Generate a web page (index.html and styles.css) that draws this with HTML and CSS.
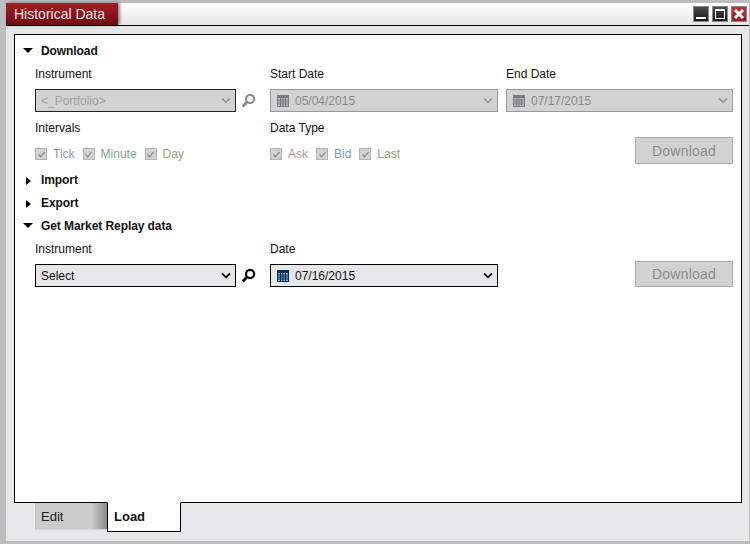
FILE: index.html
```html
<!DOCTYPE html>
<html lang="en">
<head>
<meta charset="utf-8">
<title>Historical Data</title>
<link rel="stylesheet" href="styles.css">
</head>
<body>
<svg class="defs" width="0" height="0" aria-hidden="true">
  <symbol id="chev" viewBox="0 0 12 8"><path d="M1.2 1.5 6 6.2l4.8-4.7" fill="none" stroke="currentColor" stroke-width="2.2"/></symbol>
  <symbol id="search" viewBox="0 0 14 14"><circle cx="8.5" cy="5.5" r="3.8" fill="none" stroke="currentColor" stroke-width="2"/><path d="M5.6 8.4 1.6 12.6" stroke="currentColor" stroke-width="2.6"/></symbol>
  <symbol id="cal" viewBox="0 0 12 12"><rect width="12" height="12" fill="currentColor"/><rect x="1" y="3" width="10" height="8" fill="#cfe0f0" opacity=".75"/><path d="M1 5h10M1 7h10M1 9h10M3.5 3v8M6 3v8M8.5 3v8" stroke="currentColor" stroke-width="1"/></symbol>
  <symbol id="check" viewBox="0 0 9 9"><path d="M1.5 4.5 3.6 6.8 7.6 1.8" fill="none" stroke="currentColor" stroke-width="1.3"/></symbol>
</svg>
<div class="window">
  <header class="titlebar">
    <div class="title">Historical Data</div>
    <div class="winbtns">
      <span class="winbtn dark"><span class="min"></span></span>
      <span class="winbtn dark"><span class="max"></span></span>
      <span class="winbtn red"><svg width="12" height="12" viewBox="0 0 12 12"><path d="M2 2l8 8M10 2l-8 8" stroke="#fff" stroke-width="3"/></svg></span>
    </div>
  </header>
  <main class="panel">
    <div class="sechead"><span class="tri-down"></span>Download</div>
    <div class="grid">
      <div class="field">
        <label class="lbl">Instrument</label>
        <div class="pickrow">
          <div class="select w201 off focusb"><span class="val portfolio">&lt;_Portfolio&gt;</span><svg class="chev" width="10" height="7"><use href="#chev"/></svg></div>
          <svg class="search off-i" width="15" height="15"><use href="#search"/></svg>
        </div>
      </div>
      <div class="field">
        <label class="lbl">Start Date</label>
        <div class="select w228 off"><svg class="cal" width="12" height="12"><use href="#cal"/></svg><span class="val">05/04/2015</span><svg class="chev" width="10" height="7"><use href="#chev"/></svg></div>
      </div>
      <div class="field">
        <label class="lbl">End Date</label>
        <div class="select w227 off"><svg class="cal" width="12" height="12"><use href="#cal"/></svg><span class="val">07/17/2015</span><svg class="chev" width="10" height="7"><use href="#chev"/></svg></div>
      </div>
      <div class="field opts">
        <label class="lbl">Intervals</label>
        <div class="checks">
          <span class="chk"><span class="box"><svg width="9" height="9"><use href="#check"/></svg></span><span class="c1">Tick</span></span>
          <span class="chk"><span class="box"><svg width="9" height="9"><use href="#check"/></svg></span><span class="c2">Minute</span></span>
          <span class="chk"><span class="box"><svg width="9" height="9"><use href="#check"/></svg></span><span class="c3">Day</span></span>
        </div>
      </div>
      <div class="field opts">
        <label class="lbl">Data Type</label>
        <div class="checks">
          <span class="chk"><span class="box"><svg width="9" height="9"><use href="#check"/></svg></span><span class="c4">Ask</span></span>
          <span class="chk"><span class="box"><svg width="9" height="9"><use href="#check"/></svg></span><span class="c1">Bid</span></span>
          <span class="chk"><span class="box"><svg width="9" height="9"><use href="#check"/></svg></span><span class="c3">Last</span></span>
        </div>
      </div>
      <div class="btncell top"><button class="dl" type="button" disabled>Download</button></div>
    </div>
    <div class="sechead"><span class="tri-right"></span>Import</div>
    <div class="sechead"><span class="tri-right"></span>Export</div>
    <div class="sechead"><span class="tri-down"></span>Get Market Replay data</div>
    <div class="grid">
      <div class="field">
        <label class="lbl">Instrument</label>
        <div class="pickrow">
          <div class="select w201 on"><span class="val">Select</span><svg class="chev" width="10" height="7"><use href="#chev"/></svg></div>
          <svg class="search" width="15" height="15"><use href="#search"/></svg>
        </div>
      </div>
      <div class="field">
        <label class="lbl">Date</label>
        <div class="select w228 on"><svg class="cal active" width="12" height="12"><use href="#cal"/></svg><span class="val">07/16/2015</span><svg class="chev" width="10" height="7"><use href="#chev"/></svg></div>
      </div>
      <div class="btncell low"><button class="dl" type="button" disabled>Download</button></div>
    </div>
  </main>
  <nav class="tabs">
    <div class="tab edit">Edit</div>
    <div class="tab load">Load</div>
  </nav>
</div>
</body>
</html>
```
FILE: styles.css
```css
* { box-sizing: border-box; }
html, body { margin: 0; padding: 0; }
body {
  width: 750px; height: 544px; overflow: hidden;
  background: #bdbdbd;
  font-family: "Liberation Sans", Arial, sans-serif;
  font-size: 12px; color: #111;
}
.defs { position: absolute; }
.window {
  width: 743px; height: 538px;
  margin: 3px 1px 3px 6px;
  background: #e6e7e8;
  display: flex; flex-direction: column;
}
.titlebar {
  height: 23px; flex: none;
  display: flex; justify-content: space-between;
  background: linear-gradient(#ffffff, #e6e7e8);
  border-bottom: 1px solid #000;
}
.title {
  width: 112px; height: 22px;
  background: linear-gradient(#a51e26, #7c1218 70%, #6b0e13);
  color: #eee4e4;
  font-size: 14px; line-height: 22px;
  padding-left: 8px;
  box-shadow: 2px 0 3px rgba(0,0,0,.45);
}
.winbtns { display: flex; gap: 3px; padding: 3px 2px 0 0; }
.winbtn {
  width: 16px; height: 16px;
  border: 1px solid #8a8a8a;
  display: flex; align-items: center; justify-content: center;
}
.winbtn.dark { background: linear-gradient(#4c4c4c, #161616); }
.winbtn.red { background: linear-gradient(#c2323a, #98161d); }
.min { width: 10px; height: 2px; background: #fff; margin-top: 7px; }
.max { width: 10px; height: 10px; border: 1px solid #fff; border-top-width: 2px; }
.panel {
  width: 728px; height: 469px;
  margin: 8px 0 0 8px;
  background: #fff;
  border: 1px solid #000;
  padding: 5px 0 0 20px;
  flex: none;
}
.sechead {
  height: 23px;
  font-weight: bold; line-height: 23px;
  letter-spacing: -.08px;
  position: relative;
  padding-left: 6px;
  color: #111;
}
.tri-down, .tri-right { position: absolute; width: 0; height: 0; }
.tri-down {
  left: -12px; top: 8px;
  border-left: 5px solid transparent; border-right: 5px solid transparent;
  border-top: 5px solid #000;
}
.tri-right {
  left: -9px; top: 8px;
  border-top: 4px solid transparent; border-bottom: 4px solid transparent;
  border-left: 5px solid #000;
}
.grid {
  display: grid;
  grid-template-columns: 235px 236px 227px;
}
.field { display: flex; flex-direction: column; }
.lbl { height: 20px; line-height: 22px; margin-bottom: 6px; }
.pickrow { display: flex; align-items: center; gap: 5px; }
.select {
  height: 23px;
  display: flex; align-items: center;
  padding: 0 4px 0 5px;
  border: 1px solid #000;
}
.select .val { flex: 1; line-height: 20px; }
.w201 { width: 201px; }
.w228 { width: 228px; }
.w227 { width: 227px; }
.select.on { background: #e6e7e8; color: #111; }
.select.off { background: #d2d2d2; border-color: #999; color: #888; }
.select.off.focusb { border-color: #222; }
.portfolio { color: #a0a0a0; }
.cal { margin: 0 6px 0 1px; color: #7c7c7c; flex: none; }
.cal.active { color: #002f66; }
.chev { color: #9a9a9a; flex: none; }
.on .chev { color: #000; }
.search { color: #000; flex: none; }
.search.off-i { color: #8a8a8a; }
.opts { padding: 5px 0 6px; }
.checks { display: flex; align-items: center; gap: 8px; height: 20px; padding-top: 2px; }
.chk { display: inline-flex; align-items: center; gap: 6px; height: 14px; }
.box {
  width: 12px; height: 12px;
  background: #d2d2d2; border: 1px solid #b3b3b3; color: #8d8d8d;
  display: flex; align-items: center; justify-content: center;
}
.c1 { color: #7f9fa3; }
.c2 { color: #7f9f88; }
.c3 { color: #90a085; }
.c4 { color: #a89a85; }
.btncell { display: flex; justify-content: flex-end; align-items: flex-end; }
.btncell.top { padding-bottom: 5px; }
.dl {
  width: 98px; height: 27px; padding: 0;
  background: #d2d2d2; border: 1px solid #aaa;
  color: #8c8c8c;
  font: 14px "Liberation Sans", Arial, sans-serif;
  letter-spacing: .2px;
}
.btncell.low .dl { height: 26px; }
.tabs {
  display: flex; margin: -1px 0 0 29px; flex: none;
}
.tab { font-size: 13px; }
.edit {
  width: 72px; height: 27px; margin-top: 1px;
  background: linear-gradient(90deg, #cbcbcb 0, #cbcbcb 78%, #8a8a8a 100%);
  border-left: 1px solid #c2c2c2; border-bottom: 1px solid #d4d4d4;
  padding: 6px 0 0 5px;
  color: #222;
}
.load {
  width: 74px; height: 30px;
  background: #fff;
  border: 1px solid #000; border-top-color: #fff;
  font-weight: bold;
  padding: 6px 0 0 6px;
}
```
